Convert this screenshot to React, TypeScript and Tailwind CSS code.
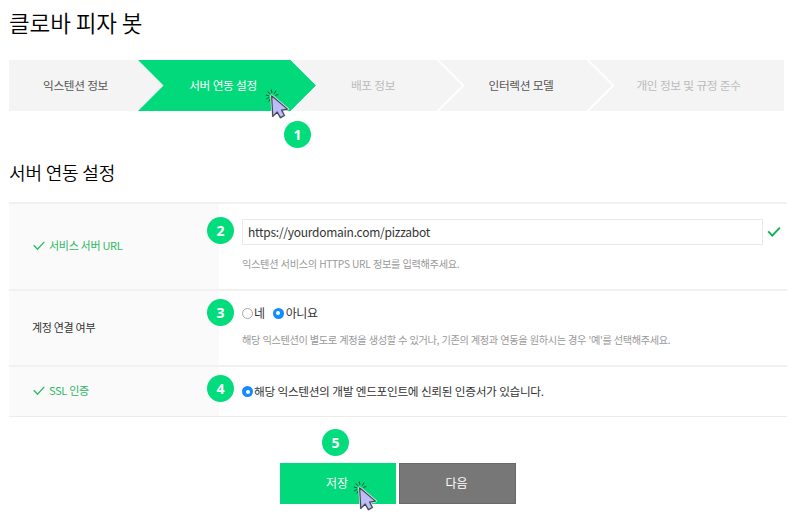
import type { ReactNode } from "react";

const KR = "font-['Noto_Sans_CJK_KR',sans-serif]";

function Badge({ n, className }: { n: number; className: string }) {
  return (
    <span
      className={`absolute z-20 flex size-[27px] items-center justify-center rounded-full bg-[#02dc7c] font-['Open_Sans',sans-serif] text-[14px] font-bold leading-none text-white ${className}`}
    >
      {n}
    </span>
  );
}

function ClickCursor({ className }: { className: string }) {
  return (
    <svg className={`absolute z-10 ${className}`} width="26" height="34" viewBox="0 0 26 34" fill="none">
      <path
        d="M3 2.6l1.7 2M6.4 .9l.4 2.6M10.8 2L9.4 4.3M1.2 6.2l2.4.5M10.6 6.2l2.4-.6M1.6 9.8l2.2-1.1M4 12.2l.9-1.8"
        stroke="#16573a"
        strokeWidth="1"
        strokeLinecap="round"
      />
      <path
        d="M6.6 6.8L7.8 27.4l4.4-4.4 3.2 5.6 4-2.1-2.8-5.4 5.9-1z"
        fill="#bcbcf8"
        stroke="#e8e8ee"
        strokeWidth="2.6"
        strokeLinejoin="round"
      />
      <path
        d="M6.6 6.8L7.8 27.4l4.4-4.4 3.2 5.6 4-2.1-2.8-5.4 5.9-1z"
        fill="#bcbcf8"
        stroke="#454555"
        strokeWidth="1.2"
        strokeLinejoin="round"
      />
    </svg>
  );
}

function Check({ bold = false }: { bold?: boolean }) {
  return bold ? (
    <svg width="14" height="12" viewBox="0 0 14 12" fill="none" className="shrink-0">
      <path d="M1.2 5.4l4 4.2L12.9 1.6" stroke="#10b457" strokeWidth="2" />
    </svg>
  ) : (
    <svg width="12" height="10" viewBox="0 0 12 10" fill="none" className="shrink-0">
      <path d="M.7 4.3l3.8 4L11.3.9" stroke="#2db865" strokeWidth="1.3" />
    </svg>
  );
}

function Radio({ checked = false }: { checked?: boolean }) {
  return checked ? (
    <span className="flex size-[11px] shrink-0 items-center justify-center rounded-full bg-[#128cff]">
      <span className="size-[4px] rounded-full bg-white" />
    </span>
  ) : (
    <span className="size-[11px] shrink-0 rounded-full border border-[#a9a9a9] bg-white" />
  );
}

function Step({ children, className }: { children: ReactNode; className: string }) {
  return (
    <li className={`flex h-[51px] shrink-0 items-center justify-center whitespace-nowrap pb-[2px] text-[11.7px] leading-none tracking-[-0.4px] [word-spacing:0.5px] ${className}`}>
      {children}
    </li>
  );
}

function Label({ children, done = false }: { children: ReactNode; done?: boolean }) {
  return (
    <div
      className={`flex w-[210px] shrink-0 items-center gap-[4px] self-stretch bg-[#fafafa] pb-[2px] text-[11px] leading-none tracking-[-0.3px] ${
        done ? "pl-[24px] text-[#2db865]" : "pl-[23px] text-[#333]"
      }`}
    >
      {done && <Check />}
      <span>{children}</span>
    </div>
  );
}

export default function App() {
  return (
    <main className={`relative h-[520px] w-[800px] overflow-hidden bg-white pl-[9px] ${KR}`}>
      <h1 className="h-[60px] pt-[10px] text-[22.5px] font-[350] leading-[24px] tracking-[-0.1px] text-black">클로바 피자 봇</h1>

      <ol className="flex w-[775px]">
        <Step className="w-[154px] bg-[#f4f4f4] pr-[21px] text-[#555] [clip-path:polygon(0_0,calc(100%-25.5px)_0,100%_50%,calc(100%-25.5px)_100%,0_100%)]">
          익스텐션 정보
        </Step>
        <Step className="-ml-[25px] w-[178px] bg-[#02d97a] pr-[8px] text-white [clip-path:polygon(0_0,calc(100%-25.5px)_0,100%_50%,calc(100%-25.5px)_100%,0_100%,25.5px_50%)]">
          서버 연동 설정
        </Step>
        <Step className="-ml-[24px] w-[170px] bg-[#f4f4f4] pr-[8px] text-[#bbb] [clip-path:polygon(0_0,calc(100%-25.5px)_0,100%_50%,calc(100%-25.5px)_100%,0_100%,25.5px_50%)]">
          배포 정보
        </Step>
        <Step className="-ml-[23px] w-[173px] bg-[#f4f4f4] pr-[9px] text-[#555] [clip-path:polygon(0_0,calc(100%-25.5px)_0,100%_50%,calc(100%-25.5px)_100%,0_100%,25.5px_50%)]">
          인터렉션 모델
        </Step>
        <Step className="-ml-[23px] w-[195px] bg-[#f4f4f4] pl-[4px] text-[#bbb] [clip-path:polygon(0_0,100%_0,100%_100%,0_100%,25.5px_50%)]">
          개인 정보 및 규정 준수
        </Step>
      </ol>

      <h2 className="h-[91px] pt-[51px] text-[18px] font-[350] leading-[20px] tracking-[-0.15px] text-black">서버 연동 설정</h2>

      <section className="w-[778px] border-b border-t-2 border-b-[#ececec] border-t-[#f1f1f1]">
        <div className="flex h-[87px] border-b-2 border-[#f1f1f1]">
          <Label done>서비스 서버 URL</Label>
          <div className="pl-[23px] pt-[15px]">
            <div className="flex items-center gap-[4px]">
              <div className="flex h-[26px] w-[521px] items-center border border-[#e9e9e9] pb-[1px] pl-[5px] text-[12px] leading-none tracking-[-0.26px] text-[#333]">
                https://yourdomain.com/pizzabot
              </div>
              <Check bold />
            </div>
            <p className="mt-[12px] text-[10.2px] leading-[14px] tracking-[-0.33px] [word-spacing:0.5px] text-[#999]">
              익스텐션 서비스의 HTTPS URL 정보를 입력해주세요.
            </p>
          </div>
        </div>

        <div className="flex h-[76px] border-b-2 border-[#f1f1f1]">
          <Label>계정 연결 여부</Label>
          <div className="pl-[23px] pt-[14px]">
            <div className="flex h-[16px] items-center text-[12px] leading-none tracking-[-0.4px] text-[#333]">
              <Radio />
              <span className="ml-[1px] mr-[8px]">네</span>
              <Radio checked />
              <span className="ml-[2px]">아니요</span>
            </div>
            <p className="mt-[12px] whitespace-nowrap text-[10.2px] leading-[14px] tracking-[-0.37px] [word-spacing:0.5px] text-[#999]">
              해당 익스텐션이 별도로 계정을 생성할 수 있거나, 기존의 계정과 연동을 원하시는 경우 '예'를 선택해주세요.
            </p>
          </div>
        </div>

        <div className="flex h-[49px]">
          <Label done>SSL 인증</Label>
          <div className="flex items-center gap-[1px] pl-[23px] text-[11.7px] leading-none tracking-[-0.36px] [word-spacing:0.5px] text-[#333]">
            <Radio checked />
            <span className="pb-[2px]">해당 익스텐션의 개발 엔드포인트에 신뢰된 인증서가 있습니다.</span>
          </div>
        </div>
      </section>

      <div className="mt-[46px] flex gap-[3px] pl-[271px] text-[12px] text-white">
        <button className="h-[41px] w-[116px] bg-[#02d97a] pb-[1px] pr-[2px] leading-none">저장</button>
        <button className="h-[41px] w-[117px] border border-[#696969] bg-[#777] pb-[1px] pr-[2px] leading-none">다음</button>
      </div>

      <ClickCursor className="left-[265px] top-[89px]" />
      <ClickCursor className="left-[353px] top-[481px]" />
      <Badge n={1} className="left-[284px] top-[121px]" />
      <Badge n={2} className="left-[207px] top-[217px]" />
      <Badge n={3} className="left-[207px] top-[299px]" />
      <Badge n={4} className="left-[207px] top-[375px]" />
      <Badge n={5} className="left-[322px] top-[429px]" />
    </main>
  );
}
